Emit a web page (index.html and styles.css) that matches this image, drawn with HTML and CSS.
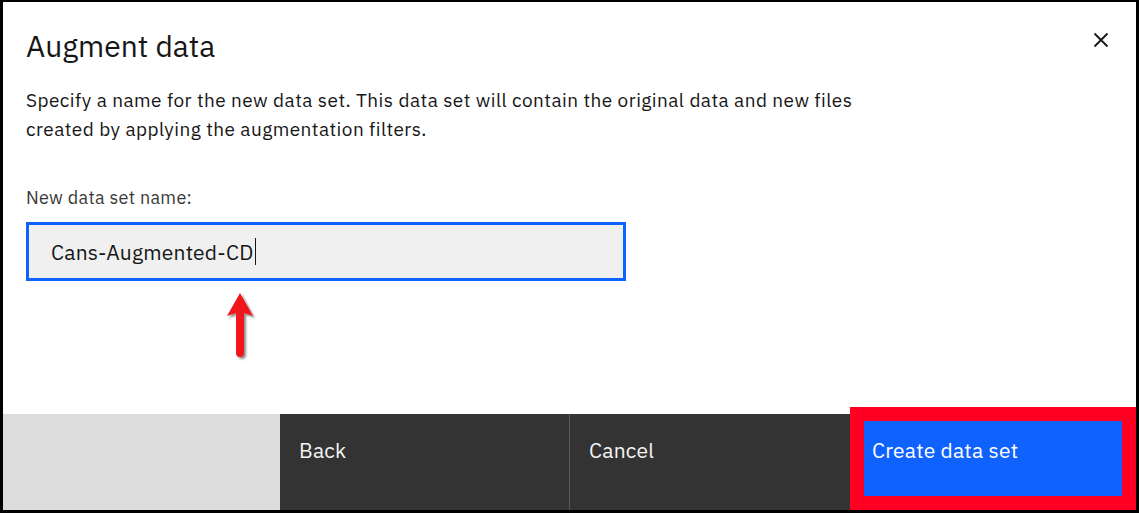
FILE: index.html
```html
<!DOCTYPE html>
<html>
<head>
<meta charset="utf-8">
<link rel="stylesheet" href="styles.css">
</head>
<body>
<div class="frame">
  <div class="modal">
    <div class="body">
      <div class="header">
        <h1 class="title">Augment data</h1>
        <button class="close" aria-label="Close">
          <svg width="16" height="16" viewBox="0 0 16 16"><path d="M1.5 1.5 L14.5 14.5 M14.5 1.5 L1.5 14.5" stroke="#161616" stroke-width="1.8" fill="none"/></svg>
        </button>
      </div>
      <p class="desc">Specify a name for the new data set. This data set will contain the original data and new files created by applying the augmentation filters.</p>
      <label class="label">New data set name:</label>
      <div class="input"><span class="value">Cans-Augmented-CD</span><span class="caret"></span></div>
      <svg class="arrow" width="40" height="80" viewBox="0 0 40 80">
        <defs>
          <filter id="sh" x="-50%" y="-50%" width="200%" height="200%">
            <feGaussianBlur in="SourceAlpha" stdDeviation="1.2"/>
            <feOffset dx="2" dy="2" result="b"/>
            <feComponentTransfer><feFuncA type="linear" slope="0.45"/></feComponentTransfer>
            <feMerge><feMergeNode/><feMergeNode in="SourceGraphic"/></feMerge>
          </filter>
        </defs>
        <g filter="url(#sh)">
          <path d="M20 4 L33 27 L24 24 L24 64 Q24 68 20 68 Q16 68 16 64 L16 24 L7 27 Z" fill="#f0141e"/>
        </g>
      </svg>
    </div>
    <div class="footer">
      <div class="spacer"></div>
      <button class="btn secondary">Back</button>
      <button class="btn secondary cancel">Cancel</button>
      <button class="btn primary">Create data set</button>
    </div>
  </div>
</div>
</body>
</html>
```
FILE: styles.css
```css
* { box-sizing: border-box; }
html, body { margin: 0; padding: 0; background: #000; }
.frame {
  width: 1139px;
  height: 513px;
  border-style: solid;
  border-color: #000;
  border-width: 2px 3px 3px 3px;
  background: #fff;
  font-family: "IBM Plex Sans", "Noto Sans", "Open Sans", sans-serif;
  color: #161616;
}
.modal {
  height: 100%;
  display: flex;
  flex-direction: column;
}
.body {
  flex: 1;
  position: relative;
  padding: 0 0 0 23px;
}
.header {
  display: flex;
  justify-content: space-between;
  align-items: flex-start;
  padding-top: 24px;
}
.title {
  margin: 0;
  font-size: 30px;
  font-weight: 400;
  line-height: 40px;
  letter-spacing: 0;
}
.close {
  border: 0;
  background: transparent;
  padding: 0;
  margin: 6px 27px 0 0;
  width: 16px;
  height: 16px;
  display: flex;
}
.desc {
  margin: 20px 0 0 0;
  width: 880px;
  font-size: 19px;
  letter-spacing: 0.45px;
  line-height: 29px;
  color: #161616;
}
.label {
  display: block;
  margin-top: 43px;
  font-size: 18px;
  letter-spacing: 0.3px;
  line-height: 22px;
  color: #393939;
}
.input {
  margin-top: 13px;
  width: 600px;
  height: 59px;
  border: 3px solid #0f62fe;
  background: #f0f0f0;
  display: flex;
  align-items: center;
  padding-left: 22px;
  font-size: 21px;
  letter-spacing: 0.2px;
  color: #161616;
}
.caret {
  display: inline-block;
  width: 1px;
  height: 27px;
  background: #161616;
  margin-left: 1px;
}
.arrow {
  position: absolute;
  left: 217px;
  top: 287px;
}
.footer {
  height: 96px;
  display: flex;
  background: #333;
}
.spacer {
  width: 277px;
  background: #dcdcdc;
}
.btn {
  border: 0;
  font-family: inherit;
  font-size: 21px;
  letter-spacing: 0.2px;
  text-align: left;
  padding: 22px 0 0 19px;
  display: flex;
  align-items: flex-start;
  height: 96px;
}
.secondary {
  background: #333;
  color: #f4f4f4;
  width: 289px;
}
.cancel {
  width: 281px;
  border-left: 1px solid #5a5a5a;
}
.primary {
  flex: 1;
  background: #0f62fe;
  color: #fff;
  position: relative;
  outline: 14px solid #ff0022;
  outline-offset: -14px;
  margin-top: -7px;
  height: 103px;
  padding: 29px 0 0 22px;
}
```
